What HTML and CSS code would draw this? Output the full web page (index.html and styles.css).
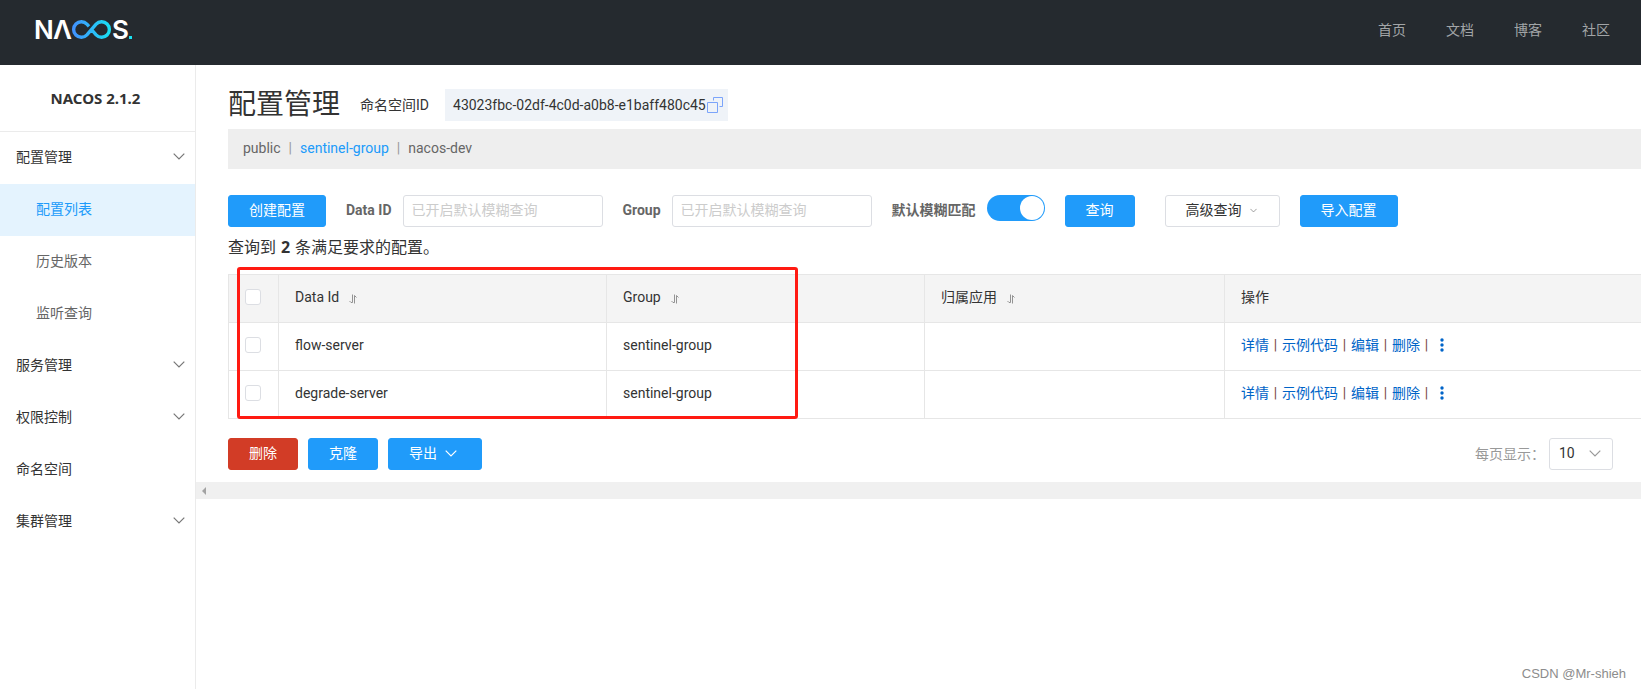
FILE: index.html
```html
<!DOCTYPE html>
<html lang="zh-CN">
<head>
<meta charset="utf-8">
<title>Nacos</title>
<link rel="stylesheet" href="styles.css">
</head>
<body>
<svg class="defs" aria-hidden="true">
  <symbol id="chevron" viewBox="0 0 12 7"><path d="M0.7 0.7 6 6 11.3 0.7" fill="none" stroke="currentColor" stroke-width="1.2"/></symbol>
  <symbol id="sort" viewBox="0 0 8 10"><path d="M3.500 0.500V8.500H2L0.500 7M5.500 9.500V1.500L7.500 3.500" fill="none" stroke="currentColor" stroke-width="0.9"/></symbol>
  <symbol id="dots" viewBox="0 0 4 14"><circle cx="2" cy="2" r="1.7"/><circle cx="2" cy="7" r="1.7"/><circle cx="2" cy="12" r="1.7"/></symbol>
</svg>
<header class="topbar">
  <a class="logo" href="#" aria-label="NACOS">
    <svg width="100" height="36" viewBox="-2 0 100 36">
      <defs><linearGradient id="flow" gradientUnits="userSpaceOnUse" x1="36" y1="0" x2="75" y2="0"><stop offset="0" stop-color="#4390ff"/><stop offset="1" stop-color="#18e2f2"/></linearGradient></defs>
      <text class="logo-text" x="-2" y="27">N</text>
      <text class="logo-text" x="17" y="27">Λ</text>
      <path d="M53 14.400L50.900 12.200A7.700 7.700 0 1 0 50.900 22.800L60.100 12.200A7.700 7.700 0 1 1 60.100 22.800L55.500 17.500" fill="none" stroke="url(#flow)" stroke-width="3.400"/>
      <text class="logo-text" x="76" y="27">S</text>
      <rect x="93" y="24" width="3" height="3" fill="#18e2f2"/>
    </svg>
  </a>
  <nav class="topnav"><a href="#">首页</a><a href="#">文档</a><a href="#">博客</a><a href="#">社区</a></nav>
</header>
<div class="shell">
  <aside class="sidebar">
    <h2 class="version">NACOS 2.1.2</h2>
    <nav class="menu">
      <a class="menu-item" href="#">配置管理<svg class="chev"><use href="#chevron"/></svg></a>
      <a class="menu-item sub active" href="#">配置列表</a>
      <a class="menu-item sub" href="#">历史版本</a>
      <a class="menu-item sub" href="#">监听查询</a>
      <a class="menu-item" href="#">服务管理<svg class="chev"><use href="#chevron"/></svg></a>
      <a class="menu-item" href="#">权限控制<svg class="chev"><use href="#chevron"/></svg></a>
      <a class="menu-item" href="#">命名空间</a>
      <a class="menu-item" href="#">集群管理<svg class="chev"><use href="#chevron"/></svg></a>
    </nav>
  </aside>
  <main class="main">
    <div class="content">
      <div class="heading">
        <h1>配置管理</h1>
        <span class="ns-label">命名空间ID</span>
        <span class="ns-id">43023fbc-02df-4c0d-a0b8-e1baff480c45
          <svg width="16" height="16" viewBox="0 0 16 16" fill="none" stroke="#7ba4fa"><path d="M.5 5.500h10v10h-10zM6.500 3.500v-3h9v9h-3"/></svg>
        </span>
      </div>
      <div class="ns-bar"><a href="#">public</a><span>|</span><a class="current" href="#">sentinel-group</a><span>|</span><a href="#">nacos-dev</a></div>
      <form class="filters">
        <button type="button" class="btn primary">创建配置</button>
        <div class="field"><label for="dataId">Data ID</label><input class="text" id="dataId" placeholder="已开启默认模糊查询"></div>
        <div class="field"><label for="group">Group</label><input class="text" id="group" placeholder="已开启默认模糊查询"></div>
        <div class="field"><label for="fuzzy">默认模糊匹配</label><input class="switch" type="checkbox" id="fuzzy" checked></div>
        <button type="button" class="btn primary">查询</button>
        <button type="button" class="btn advanced">高级查询<svg class="chev small"><use href="#chevron"/></svg></button>
        <button type="button" class="btn primary">导入配置</button>
      </form>
      <p class="summary">查询到 <b>2</b> 条满足要求的配置。</p>
      <div class="table-wrap">
        <table>
          <colgroup><col class="c-check"><col class="c-id"><col class="c-group"><col class="c-app"><col></colgroup>
          <thead><tr>
            <th><input type="checkbox" aria-label="全选"></th>
            <th>Data Id<svg class="sort"><use href="#sort"/></svg></th>
            <th>Group<svg class="sort"><use href="#sort"/></svg></th>
            <th>归属应用<svg class="sort"><use href="#sort"/></svg></th>
            <th>操作</th>
          </tr></thead>
          <tbody>
            <tr><td><input type="checkbox" aria-label="flow-server"></td><td>flow-server</td><td>sentinel-group</td><td></td>
              <td><div class="ops"><a href="#">详情</a><i>|</i><a href="#">示例代码</a><i>|</i><a href="#">编辑</a><i>|</i><a href="#">删除</a><i>|</i><a class="more" href="#" aria-label="更多"><svg width="4" height="14"><use href="#dots"/></svg></a></div></td></tr>
            <tr><td><input type="checkbox" aria-label="degrade-server"></td><td>degrade-server</td><td>sentinel-group</td><td></td>
              <td><div class="ops"><a href="#">详情</a><i>|</i><a href="#">示例代码</a><i>|</i><a href="#">编辑</a><i>|</i><a href="#">删除</a><i>|</i><a class="more" href="#" aria-label="更多"><svg width="4" height="14"><use href="#dots"/></svg></a></div></td></tr>
          </tbody>
        </table>
        <div class="highlight"></div>
      </div>
      <div class="actions">
        <button type="button" class="btn danger">删除</button>
        <button type="button" class="btn primary">克隆</button>
        <button type="button" class="btn primary export">导出<svg class="chev"><use href="#chevron"/></svg></button>
        <div class="pager">
          <label for="size">每页显示：</label>
          <div class="select"><select id="size"><option>10</option><option>20</option></select><svg class="chev"><use href="#chevron"/></svg></div>
        </div>
      </div>
    </div>
    <div class="scrollbar"><svg width="4" height="8" viewBox="0 0 4 8"><path d="M4 0v8L0 4z" fill="#a3a3a3"/></svg></div>
  </main>
</div>
<div class="watermark">CSDN @Mr-shieh</div>
</body>
</html>
```
FILE: styles.css
```css
* { box-sizing: border-box; }
body {
  margin: 0;
  min-height: 100vh;
  display: flex;
  flex-direction: column;
  position: relative;
  background: #fff;
  color: #333;
  font: 14px/20px Roboto, "Noto Sans CJK SC", sans-serif;
}
a { color: inherit; text-decoration: none; }
button, input, select { font: inherit; color: inherit; margin: 0; }
.defs { position: absolute; width: 0; height: 0; }

.topbar {
  height: 65px;
  padding: 0 31px 5px 34px;
  display: flex;
  align-items: center;
  justify-content: space-between;
  background: #252a2f;
}
.logo svg { display: block; overflow: visible; }
.logo-text { font: 600 26px Inter, sans-serif; fill: #fff; }
.topnav { display: flex; gap: 40px; color: #a2a5a7; }

.shell { flex: 1; display: flex; }
.sidebar { width: 196px; flex: none; border-right: 1px solid #ebebeb; }
.version {
  margin: 0;
  height: 67px;
  padding-right: 4px;
  display: flex;
  align-items: center;
  justify-content: center;
  border-bottom: 1px solid #ebebeb;
  font: 700 15px/20px "Noto Sans", sans-serif;
}
.menu-item {
  height: 52px;
  padding: 0 10px 3px 16px;
  display: flex;
  align-items: center;
  justify-content: space-between;
}
.menu-item.sub { padding-left: 36px; color: #666; }
.menu-item.active { background: #e4f3fe; color: #209bfa; }
.chev { width: 12px; height: 7px; color: #777; }
.chev.small { width: 7px; height: 5px; }

.main { flex: 1; min-width: 0; }
.content { padding: 20px 0 12px 32px; }
.heading { height: 40px; padding-bottom: 1px; display: flex; align-items: center; }
.heading h1 { margin: 0 20px 0 0; font-size: 28px; line-height: 36px; font-weight: 400; }
.ns-label { margin-right: 16px; }
.ns-id {
  height: 32px;
  padding: 0 5px 0 8px;
  display: flex;
  align-items: center;
  gap: 1px;
  background: #eff3f8;
}
.ns-bar {
  height: 40px;
  margin-top: 4px;
  padding: 0 15px 2px;
  display: flex;
  align-items: center;
  gap: 8px;
  background: #eee;
  color: #666;
}
.ns-bar span { color: #999; }
.ns-bar .current { color: #209bfa; }

.filters { margin-top: 26px; display: flex; gap: 20px; }
.field { display: flex; align-items: center; gap: 11px; }
.field label { padding-bottom: 2px; font-weight: 700; color: #666; }
.text {
  width: 200px;
  height: 32px;
  padding: 0 8px 2px;
  border: 1px solid #dcdee3;
  border-radius: 3px;
}
.text::placeholder { color: #ccc; }
.btn {
  height: 32px;
  padding: 0 20px 2px;
  display: flex;
  align-items: center;
  gap: 8px;
  border: 1px solid transparent;
  border-radius: 3px;
}
.btn .chev { color: inherit; }
.primary { background: #209bfa; border-color: #209bfa; color: #fff; }
.danger { background: #d23c26; border-color: #d23c26; color: #fff; }
.advanced { margin-left: 10px; padding-right: 22px; background: #fff; border-color: #dcdee3; }
.btn.advanced .chev { color: #777; }
.export { padding-right: 24px; }
.switch {
  appearance: none;
  width: 58px;
  height: 26px;
  padding: 1px;
  align-self: flex-start;
  display: flex;
  justify-content: flex-end;
  border-radius: 13px;
  background: #209bfa;
}
.switch::before { content: ""; width: 24px; height: 24px; border-radius: 50%; background: #fff; }
.summary { margin: 8px 0 14px; font-size: 16px; line-height: 24px; }
.summary b { padding: 0 1px; font-family: "Noto Sans", sans-serif; }

.table-wrap { position: relative; }
table { width: 100%; table-layout: fixed; border-collapse: collapse; }
.c-check { width: 50px; }
.c-id { width: 328px; }
.c-group { width: 318px; }
.c-app { width: 300px; }
th, td {
  height: 48px;
  padding: 0 16px 4px;
  border: 1px solid #e6e6e6;
  text-align: left;
  font-weight: 400;
}
th:last-child, td:last-child { border-right: 0; }
th { background: #f4f4f4; }
td input, th input {
  appearance: none;
  display: block;
  width: 16px;
  height: 16px;
  border: 1px solid #dcdee3;
  border-radius: 3px;
  background: #fff;
}
.sort { width: 8px; height: 10px; margin-left: 10px; vertical-align: -2px; color: #888; }
.ops { display: flex; align-items: center; color: #0064c8; }
.ops i { width: 13px; text-align: center; font-style: normal; color: #744; }
.ops svg { display: block; fill: currentColor; }
.more { margin-left: 7px; }
.highlight {
  position: absolute;
  left: 9px;
  top: -7px;
  width: 561px;
  bottom: 0;
  border: 3px solid #ff1a12;
  border-radius: 3px;
  pointer-events: none;
}

.actions { margin-top: 19px; padding-right: 28px; display: flex; gap: 10px; }
.pager { margin-left: auto; display: flex; align-items: center; gap: 4px; color: #999; }
.pager label { padding-bottom: 2px; font-family: "Noto Sans CJK TC", sans-serif; }
.select { position: relative; color: #333; }
.select select {
  appearance: none;
  width: 64px;
  height: 32px;
  padding: 0 9px 2px;
  border: 1px solid #dcdee3;
  border-radius: 3px;
  background: #fff;
}
.select .chev { position: absolute; right: 12px; top: 12px; color: #999; pointer-events: none; }
.scrollbar { height: 17px; padding-left: 6px; display: flex; align-items: center; background: #f0f0f0; }
.watermark {
  position: absolute;
  right: 15px;
  bottom: 5px;
  color: #8c8c8c;
  font-family: "Liberation Sans", sans-serif;
  font-size: 13px;
}
```
